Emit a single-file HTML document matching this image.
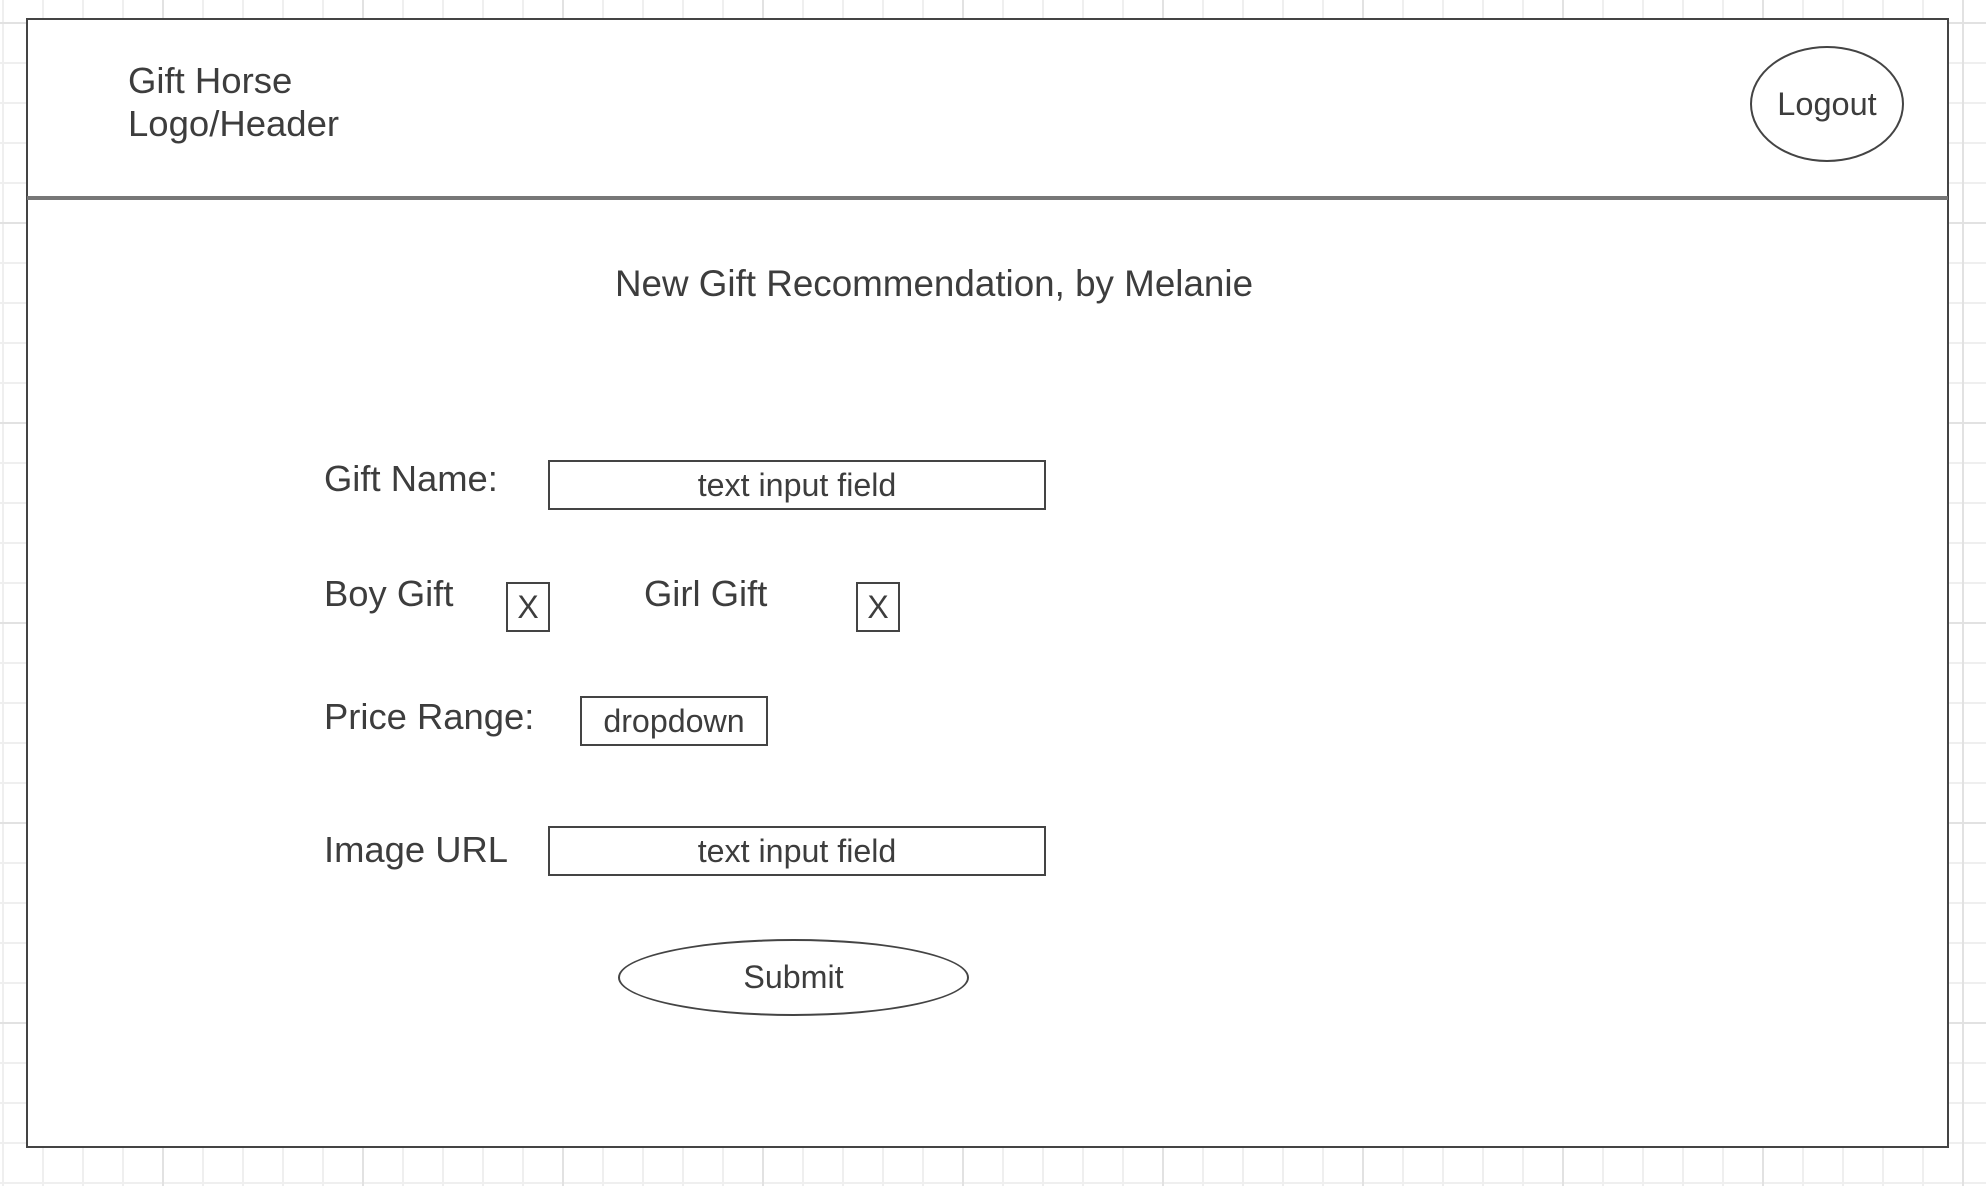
<!DOCTYPE html>
<html><head><meta charset="utf-8"><style>
html,body{margin:0;padding:0}
body{width:1986px;height:1186px;position:relative;overflow:hidden;background:#fff;
background-image:
linear-gradient(to right,#e2e2e2 2px,transparent 2px),
linear-gradient(to bottom,#e2e2e2 2px,transparent 2px),
linear-gradient(to right,#efefef 2px,transparent 2px),
linear-gradient(to bottom,#efefef 2px,transparent 2px);
background-size:200px 200px,200px 200px,40px 40px,40px 40px;
background-position:162px 0,0 22px,2px 0,0 22px;
font-family:"Liberation Sans",Arial,sans-serif;color:#3d3d3d}
.a{position:absolute}
.frame{left:26px;top:18px;width:1923px;height:1130px;border:2px solid #444;background:#fff;box-sizing:border-box}
.hr{left:27px;top:196px;width:1921px;height:4px;background:#777}
.box{position:absolute;border:2px solid #444;box-sizing:border-box;display:flex;align-items:center;justify-content:center;background:#fff}
.ell{position:absolute;border:2px solid #444;border-radius:50%;box-sizing:border-box;display:flex;align-items:center;justify-content:center;background:#fff}
.lbl{position:absolute;font-size:36.4px;line-height:40px}
</style></head><body>
<div class="a frame"></div>
<div class="a hr"></div>
<div class="a" style="left:128px;top:59px;font-size:36.5px;line-height:43px">Gift Horse<br>Logo/Header</div>
<div class="ell" style="left:1750px;top:46px;width:154px;height:116px;font-size:32.5px">Logout</div>
<div class="a" style="left:534px;top:262px;width:800px;text-align:center;font-size:36.8px;line-height:44px">New Gift Recommendation, by Melanie</div>
<div class="lbl" style="left:324px;top:459px">Gift Name:</div>
<div class="box" style="left:548px;top:460px;width:498px;height:50px;font-size:32.2px">text input field</div>
<div class="lbl" style="left:324px;top:574px">Boy Gift</div>
<div class="box" style="left:506px;top:582px;width:44px;height:50px;font-size:32px">X</div>
<div class="lbl" style="left:644px;top:574px">Girl Gift</div>
<div class="box" style="left:856px;top:582px;width:44px;height:50px;font-size:32px">X</div>
<div class="lbl" style="left:324px;top:697px">Price Range:</div>
<div class="box" style="left:580px;top:696px;width:188px;height:50px;font-size:32.2px">dropdown</div>
<div class="lbl" style="left:324px;top:830px">Image URL</div>
<div class="box" style="left:548px;top:826px;width:498px;height:50px;font-size:32.2px">text input field</div>
<div class="ell" style="left:618px;top:939px;width:351px;height:77px;font-size:32.2px">Submit</div>
</body></html>
